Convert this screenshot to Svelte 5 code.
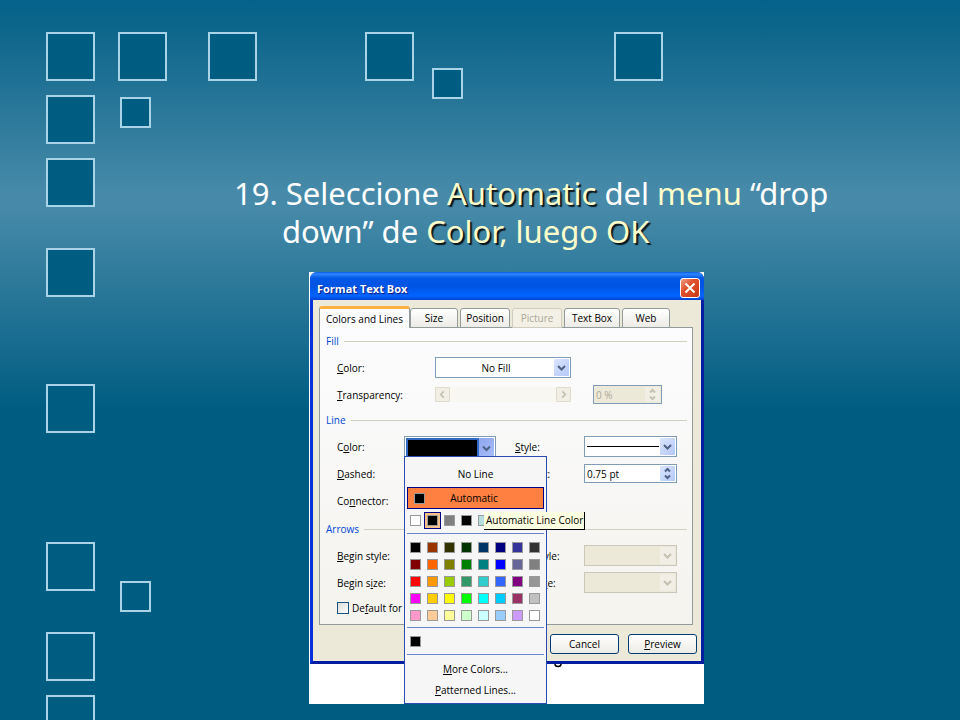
<script>
  const squares = [
    [47, 32, 47], [119, 32, 47], [209, 32, 47], [366, 32, 47], [615, 32, 47],
    [47, 95, 47], [47, 158, 47], [47, 248, 47], [47, 384, 47], [47, 542, 47],
    [47, 632, 47], [47, 695, 47], [121, 97, 29], [433, 68, 29], [121, 581, 29],
  ];

  const tabs = [
    { name: 'Colors and Lines', kind: 'active' },
    { name: 'Size', kind: 'short' },
    { name: 'Position', kind: 'medium' },
    { name: 'Picture', kind: 'medium', disabled: true },
    { name: 'Text Box', kind: 'long' },
    { name: 'Web', kind: 'short' },
  ];

  const scheme = ['#ffffff', '#000000', '#808080', '#000000', '#b5dede', '#333399', '#009999', '#99cc00'];

  const palette = [
    '#000000', '#993300', '#333300', '#003300', '#003366', '#000080', '#333399', '#333333',
    '#800000', '#ff6600', '#808000', '#008000', '#008080', '#0000ff', '#666699', '#808080',
    '#ff0000', '#ff9900', '#99cc00', '#339966', '#33cccc', '#3366ff', '#800080', '#969696',
    '#ff00ff', '#ffcc00', '#ffff00', '#00ff00', '#00ffff', '#00ccff', '#993366', '#c0c0c0',
    '#ff99cc', '#ffcc99', '#ffff99', '#ccffcc', '#ccffff', '#99ccff', '#cc99ff', '#ffffff',
  ];
</script>

<style>
  :global(body) {
    margin: 0;
    background: #005d82;
  }

  .slide {
    position: relative;
    box-sizing: border-box;
    min-height: 100vh;
    padding: 174px 96px 16px 234px;
    overflow: hidden;
    background: linear-gradient(#05628a 0, #0d668b 30px, #4689a8 190px, #4689a8 210px, #005d82 410px);
  }

  .squares {
    position: absolute;
    top: 0;
    left: 0;
    width: 100%;
    height: 100%;
  }

  .squares rect {
    fill: #005d82;
    stroke: #a9d3e6;
    stroke-width: 2;
  }

  h1 {
    position: relative;
    margin: 0 0 22px;
    padding-left: 48px;
    text-indent: -48px;
    font: 400 31px/38px "Noto Sans", sans-serif;
    color: #fff;
  }

  h1 em {
    font-style: normal;
    color: #ffffcc;
  }

  h1 .strong {
    text-shadow: 2px 2px 1px rgba(0, 0, 0, 0.85);
  }

  .picture {
    position: relative;
    box-sizing: border-box;
    width: 395px;
    min-height: 432px;
    margin-left: 75px;
    padding-left: 1px;
    background: #fff;
    font: 10px/16px "Open Sans", sans-serif;
    color: #000;
  }

  .scrap {
    display: block;
    width: 8px;
    height: 4px;
    margin-left: 244px;
  }

  button,
  select,
  input {
    box-sizing: border-box;
    margin: 0;
    font: inherit;
    color: inherit;
  }

  u {
    text-underline-offset: 1px;
  }

  .dialog {
    border: solid #0831d9;
    border-width: 0 3px 3px;
    border-right-color: #001ea0;
    border-bottom-color: #001ea0;
    border-radius: 7px 7px 0 0;
    background: #ece9d8;
  }

  .titlebar {
    display: flex;
    align-items: center;
    justify-content: space-between;
    height: 28px;
    margin: 0 -3px;
    padding: 0 4px 0 7px;
    box-sizing: border-box;
    border-radius: 7px 7px 0 0;
    background: linear-gradient(#0a5ae0 0, #2f86ff 2px, #0458e6 6px, #0054e3 50%, #0264ff 85%, #0144d0 100%);
    color: #fff;
  }

  h2 {
    margin: 5px 0 0;
    font: 700 11px/16px "Open Sans", sans-serif;
    text-shadow: 1px 1px 1px #0a1883;
  }

  .close {
    display: block;
    width: 20px;
    height: 20px;
    margin-top: 4px;
    padding: 0;
    border: 1px solid #fff;
    border-radius: 3px;
    background: linear-gradient(135deg, #f0a08a, #e0502c 40%, #c83a14);
  }

  .close svg {
    display: block;
    margin: auto;
  }

  .tabs {
    display: flex;
    align-items: flex-end;
    gap: 2px;
    padding: 6px 6px 0;
  }

  .tab {
    height: 20px;
    margin-bottom: -1px;
    padding: 0;
    border: 1px solid #919b9c;
    border-radius: 3px 3px 0 0;
    background: linear-gradient(#fff, #ecebe6);
    white-space: nowrap;
  }

  .short { width: 48px; }
  .medium { width: 50px; }
  .long { width: 56px; }

  .tab.active {
    width: 91px;
    height: 22px;
    margin-right: -2px;
    border-top: 3px solid #fbb040;
    border-bottom: 0;
    background: #fcfcfe;
    z-index: 1;
  }

  .tab:disabled {
    border-color: #d0cdbf;
    background: #f3f1e6;
    color: #aca899;
  }

  .panel {
    margin: 0 8px 0 6px;
    padding: 5px;
    border: 1px solid #919b9c;
    background: linear-gradient(#fcfcfe, #f4f3ee);
  }

  fieldset {
    min-width: 0;
    margin: 0;
    padding: 0 0 0 12px;
    border: 0;
  }

  legend {
    display: flex;
    align-items: center;
    gap: 5px;
    box-sizing: border-box;
    width: calc(100% + 12px);
    height: 16px;
    margin: 0 0 5px -12px;
    padding: 0 0 0 1px;
    color: #0046d5;
  }

  legend::after {
    content: '';
    flex: 1;
    height: 1px;
    background: #d0d0bf;
  }

  .lines {
    margin-top: 4px;
  }

  .arrows {
    margin-top: 7px;
  }

  .row {
    display: grid;
    grid-template-columns: 67px 92px 88px 93px;
    align-items: center;
    height: 27px;
  }

  .row.wide {
    grid-template-columns: 98px 136px 91px;
  }

  .row > label:nth-child(3) {
    padding-left: 19px;
  }

  .row > .zero {
    margin-left: 22px;
  }

  .combo,
  .spin {
    position: relative;
    display: grid;
    grid-template-columns: 1fr 15px;
    box-sizing: border-box;
    height: 21px;
    padding: 1px;
    border: 1px solid #7f9db9;
    background: #fff;
  }

  .spin {
    height: 19px;
  }

  .combo select,
  .spin input {
    width: 100%;
    min-width: 0;
    height: 100%;
    padding: 0 0 0 1px;
    appearance: none;
    border: 0;
    border-radius: 0;
    background: transparent;
    outline: 0;
    opacity: 1;
  }

  .combo select.centered { text-align: center; }

  .combo select.black {
    border: 2px solid #316ac5;
    background: #000;
  }

  .combo select.thin {
    background: linear-gradient(#000, #000) center / calc(100% - 2px) 1px no-repeat;
  }

  .arrow {
    display: block;
    width: 100%;
    height: 100%;
    border-radius: 1px;
    background: linear-gradient(135deg, #dbe5ff, #b4c8f6);
    fill: none;
    stroke: #4d6185;
    stroke-width: 2;
  }

  .open .arrow {
    background: linear-gradient(135deg, #8fa6ee, #a9bdf8);
  }

  .off {
    border-color: #c9c7ba;
    background: #ece9d8;
    color: #aca899;
  }

  .zero {
    border-color: #7f9db9;
  }

  .off .arrow,
  .scroll .arrow {
    background: #f1efe5;
    stroke: #c4c1b2;
  }

  .scroll {
    display: grid;
    grid-template-columns: 15px 1fr 15px;
    height: 15px;
    background: #f8f7f2;
  }

  .scroll .arrow {
    box-sizing: border-box;
    border: 1px solid #dedbcd;
  }

  .scroll input {
    width: 100%;
    height: 100%;
    appearance: none;
    background: transparent;
  }

  .scroll input::-webkit-slider-thumb {
    appearance: none;
    width: 0;
  }

  .default {
    display: flex;
    align-items: center;
    gap: 3px;
    height: 23px;
    padding-left: 12px;
  }

  .default input {
    width: 12px;
    height: 12px;
    appearance: none;
    border: 1px solid #1c5180;
    background: linear-gradient(135deg, #dcdcd7, #fff);
  }

  .actions {
    display: flex;
    justify-content: flex-end;
    gap: 9px;
    padding: 9px 4px 7px;
  }

  .actions button {
    width: 69px;
    height: 20px;
    padding: 0;
    border: 1px solid #003c74;
    border-radius: 3px;
    background: linear-gradient(#fff, #ecebe5);
  }

  .menu {
    position: absolute;
    top: 19px;
    left: -1px;
    z-index: 2;
    box-sizing: border-box;
    width: 143px;
    padding: 4px 2px 3px;
    border: 1px solid #2b4bb3;
    background: #f6f6f6;
  }

  .menu button {
    display: block;
    width: 100%;
    height: 21px;
    padding: 0;
    border: 0;
    background: transparent;
  }

  .menu .none {
    height: 26px;
  }

  .menu .auto {
    display: grid;
    grid-template-columns: 11px 1fr;
    align-items: center;
    height: 22px;
    margin: 0 0 3px;
    padding: 0 20px 0 6px;
    border: 1px solid #000080;
    background: #ff8040;
  }

  .swatches {
    display: grid;
    grid-template-columns: repeat(8, 17px);
    padding-bottom: 4px;
  }

  .swatches.palette {
    border: solid #6b86c9;
    border-width: 1px 0;
    padding: 5px 0 3px;
  }

  .menu .swatch {
    display: grid;
    place-items: center;
    width: 17px;
    height: 17px;
  }

  .menu .chosen {
    border: 1px solid #000080;
    background: #ffc08a;
  }

  .chip {
    display: block;
    box-sizing: border-box;
    width: 11px;
    height: 11px;
    border: 1px solid #999;
  }

  .recent {
    padding: 5px 0 4px;
    margin-bottom: 3px;
    border-bottom: 1px solid #6b86c9;
  }

  .tooltip {
    position: absolute;
    top: 55px;
    left: 79px;
    box-sizing: border-box;
    height: 18px;
    padding: 0 1px 0 2px;
    border: solid #000;
    border-width: 0 1px 1px 0;
    background: #ffffe1;
    line-height: 17px;
    white-space: nowrap;
  }
</style>

{#snippet down()}
  <svg class="arrow" viewBox="0 0 15 17"><path d="M4 7l3.500 3.500L11 7" /></svg>
{/snippet}

{#snippet updown()}
  <svg class="arrow" viewBox="0 0 15 15"><path d="M5 5.500L7.500 3L10 5.500M5 9.500L7.500 12L10 9.500" /></svg>
{/snippet}

<main class="slide">
  <svg class="squares" aria-hidden="true">
    {#each squares as [x, y, size]}
      <rect {x} y={y + 1} width={size} height={size} />
    {/each}
  </svg>

  <h1>
    19. Seleccione <em class="strong">Automatic</em> del <em>menu</em> “drop down” de
    <em class="strong">Color</em><em>, luego</em> <em class="strong">OK</em>
  </h1>

  <div class="picture">
    <section class="dialog">
      <div class="titlebar">
        <h2>Format Text Box</h2>
        <button class="close" aria-label="Close">
          <svg width="12" height="12" viewBox="0 0 12 12" stroke="#fff" stroke-width="2"><path d="M1.500 1.500l9 9M10.500 1.500l-9 9" /></svg>
        </button>
      </div>

      <div class="tabs">
        {#each tabs as tab}
          <button class="tab {tab.kind}" disabled={tab.disabled}>{tab.name}</button>
        {/each}
      </div>

      <div class="panel">
        <fieldset>
          <legend>Fill</legend>
          <div class="row wide">
            <label for="fill"><u>C</u>olor:</label>
            <div class="combo">
              <select id="fill" class="centered"><option>No Fill</option></select>
              {@render down()}
            </div>
          </div>
          <div class="row wide">
            <label for="transparency"><u>T</u>ransparency:</label>
            <div class="scroll">
              <svg class="arrow" viewBox="0 0 15 15"><path d="M9 4L5.500 7.500L9 11" /></svg>
              <input id="transparency" type="range" value="0" disabled />
              <svg class="arrow" viewBox="0 0 15 15"><path d="M6 4l3.500 3.500L6 11" /></svg>
            </div>
            <div class="spin off zero">
              <input value="0 %" aria-label="Transparency" disabled />
              {@render updown()}
            </div>
          </div>
        </fieldset>

        <fieldset class="lines">
          <legend>Line</legend>
          <div class="row">
            <label for="line">C<u>o</u>lor:</label>
            <div class="combo open">
              <select id="line" class="black"></select>
              {@render down()}
              <div class="menu">
                <button class="none">No Line</button>
                <button class="auto"><span class="chip" style:background="#000"></span>Automatic</button>
                <div class="swatches">
                  {#each scheme as color, i}
                    <button class="swatch" class:chosen={i === 1} aria-label={color}>
                      <span class="chip" style:background={color}></span>
                    </button>
                  {/each}
                </div>
                <div class="swatches palette">
                  {#each palette as color}
                    <button class="swatch" aria-label={color}>
                      <span class="chip" style:background={color}></span>
                    </button>
                  {/each}
                </div>
                <div class="recent">
                  <button class="swatch" aria-label="Recent"><span class="chip" style:background="#000"></span></button>
                </div>
                <button><u>M</u>ore Colors...</button>
                <button><u>P</u>atterned Lines...</button>
                <div class="tooltip" role="tooltip">Automatic Line Color</div>
              </div>
            </div>
            <label for="style"><u>S</u>tyle:</label>
            <div class="combo">
              <select id="style" class="thin"></select>
              {@render down()}
            </div>
          </div>
          <div class="row">
            <label for="dashed"><u>D</u>ashed:</label>
            <div class="combo"><select id="dashed"></select>{@render down()}</div>
            <label for="weight"><u>W</u>eight:</label>
            <div class="spin">
              <input id="weight" value="0.75 pt" />
              {@render updown()}
            </div>
          </div>
          <div class="row">
            <label for="connector">Co<u>n</u>nector:</label>
            <div class="combo"><select id="connector"></select>{@render down()}</div>
          </div>
        </fieldset>

        <fieldset class="arrows">
          <legend>Arrows</legend>
          <div class="row">
            <label for="begin-style"><u>B</u>egin style:</label>
            <div class="combo off"><select id="begin-style" disabled></select>{@render down()}</div>
            <label for="end-style"><u>E</u>nd style:</label>
            <div class="combo off"><select id="end-style" disabled></select>{@render down()}</div>
          </div>
          <div class="row">
            <label for="begin-size">Begin s<u>i</u>ze:</label>
            <div class="combo off"><select id="begin-size" disabled></select>{@render down()}</div>
            <label for="end-size">End si<u>z</u>e:</label>
            <div class="combo off"><select id="end-size" disabled></select>{@render down()}</div>
          </div>
        </fieldset>

        <div class="default">
          <input id="default" type="checkbox" />
          <label for="default">De<u>f</u>ault for</label>
        </div>
      </div>

      <div class="actions">
        <button>Cancel</button>
        <button><u>P</u>review</button>
      </div>
    </section>
    <svg class="scrap" viewBox="0 0 8 4" aria-hidden="true"><path d="M1 0q0 2.500 3 2.500T7 0" fill="none" stroke="#000" stroke-width="1.500" /></svg>
  </div>
</main>
